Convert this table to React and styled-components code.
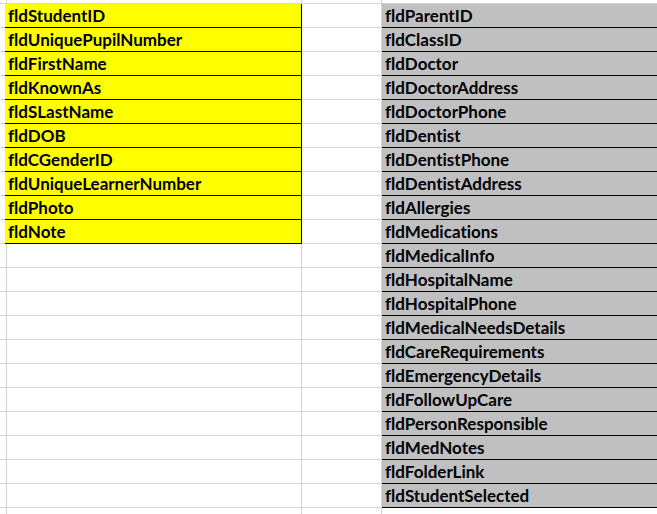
import React from "react";
import styled, { createGlobalStyle } from "styled-components";

const GlobalStyle = createGlobalStyle`
  body {
    margin: 0;
    background: #ffffff;
    overflow: hidden;
  }
`;

const colors = {
  grid: "#d4d4d4",
  yellow: "#ffff00",
  gray: "#c0c0c0",
  border: "#000000",
  text: "#000000",
};

const studentFields = [
  "fldStudentID",
  "fldUniquePupilNumber",
  "fldFirstName",
  "fldKnownAs",
  "fldSLastName",
  "fldDOB",
  "fldCGenderID",
  "fldUniqueLearnerNumber",
  "fldPhoto",
  "fldNote",
];

const medicalFields = [
  "fldParentID",
  "fldClassID",
  "fldDoctor",
  "fldDoctorAddress",
  "fldDoctorPhone",
  "fldDentist",
  "fldDentistPhone",
  "fldDentistAddress",
  "fldAllergies",
  "fldMedications",
  "fldMedicalInfo",
  "fldHospitalName",
  "fldHospitalPhone",
  "fldMedicalNeedsDetails",
  "fldCareRequirements",
  "fldEmergencyDetails",
  "fldFollowUpCare",
  "fldPersonResponsible",
  "fldMedNotes",
  "fldFolderLink",
  "fldStudentSelected",
];

const ROWS = 22;

const Sheet = styled.div`
  display: grid;
  grid-template-columns: 5px 297px 80px 300px;
  grid-template-rows: 4px repeat(${ROWS}, 24px);
  width: 682px;
  font-family: Lato, "Liberation Sans", sans-serif;
  font-weight: 700;
  font-size: 17px;
  font-variant-ligatures: none;
  color: ${colors.text};
`;

// one spreadsheet cell; $fill switches between blank grid and formatted field cells
const Cell = styled.div`
  box-sizing: border-box;
  display: flex;
  align-items: flex-end;
  padding: 0 3px 1px 3px;
  white-space: nowrap;
  overflow: hidden;
  line-height: 20px;
  background: ${(p) => (p.$fill ? p.$fill : "transparent")};
  border-right: 1px solid ${(p) => (p.$fill ? colors.border : colors.grid)};
  border-bottom: 1px solid ${(p) => (p.$fill ? colors.border : colors.grid)};
`;

export default function App() {
  const rows = [];
  for (let r = -1; r < ROWS; r++) {
    const a = r >= 0 ? studentFields[r] : undefined;
    const c = r >= 0 ? medicalFields[r] : undefined;
    rows.push(
      <React.Fragment key={r}>
        <Cell />
        <Cell $fill={a ? colors.yellow : null}>{a}</Cell>
        <Cell />
        <Cell $fill={c ? colors.gray : null}>{c}</Cell>
      </React.Fragment>
    );
  }

  return (
    <>
      <GlobalStyle />
      <Sheet>{rows}</Sheet>
    </>
  );
}
